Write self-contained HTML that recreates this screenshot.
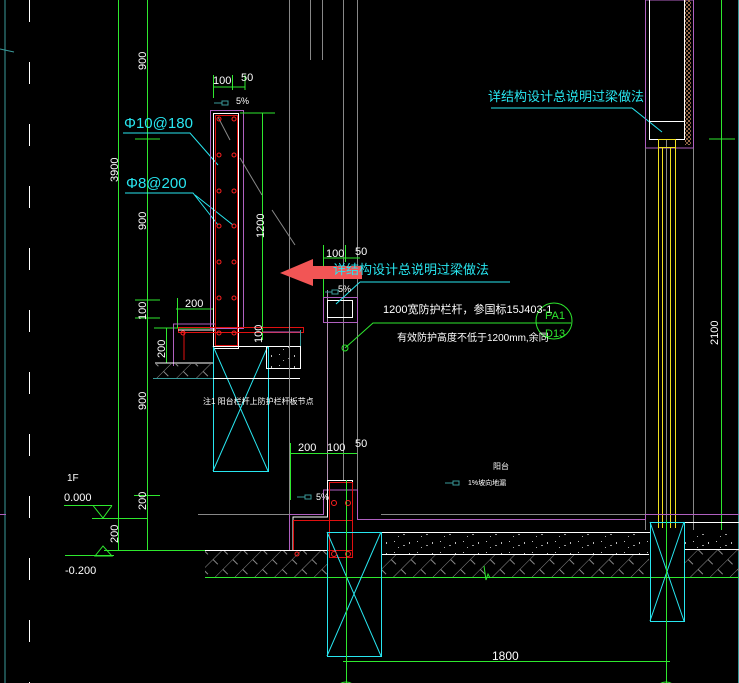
<!DOCTYPE html>
<html><head><meta charset="utf-8"><style>
html,body{margin:0;padding:0;background:#000;overflow:hidden}
svg{display:block}
text{font-family:"Liberation Sans","Noto Sans CJK SC",sans-serif}
</style></head><body>
<svg width="739" height="683" viewBox="0 0 739 683" xmlns="http://www.w3.org/2000/svg">
<defs>
<pattern id="hatch" width="14" height="14" patternUnits="userSpaceOnUse" patternTransform="rotate(45)">
<line x1="0" y1="0" x2="0" y2="14" stroke="#8a8a8a" stroke-width="1"/>
<line x1="0" y1="7" x2="7" y2="7" stroke="#8a8a8a" stroke-width="1"/>
</pattern>
<pattern id="dots" width="23" height="11" patternUnits="userSpaceOnUse">
<rect x="3" y="2" width="1" height="1" fill="#bbb"/><rect x="12" y="6" width="2" height="1" fill="#999"/><rect x="18" y="3" width="1" height="2" fill="#bbb"/><rect x="7" y="8" width="1" height="1" fill="#aaa"/>
</pattern>
<pattern id="brown" width="4" height="4" patternUnits="userSpaceOnUse"><rect width="2" height="2" fill="#a07050"/><rect x="2" y="2" width="2" height="2" fill="#8a6040"/></pattern>
</defs>
<g fill="none" stroke-width="1">
<!-- left -->
<line x1="5" y1="0" x2="5" y2="683" stroke="#3a9a9a"/>
<path d="M0 49 L14 52" stroke="#3a9a9a"/>
<line x1="29.5" y1="0" x2="29.5" y2="683" stroke="#fff" stroke-dasharray="22,40"/>
<line x1="118.5" y1="0" x2="118.5" y2="550" stroke="#2ee82e"/>
<line x1="147.5" y1="0" x2="147.5" y2="550" stroke="#2ee82e"/>
<line x1="135" y1="139" x2="160" y2="139" stroke="#2ee82e"/>
<line x1="135" y1="300" x2="160" y2="300" stroke="#2ee82e"/>
<line x1="135" y1="318" x2="160" y2="318" stroke="#2ee82e"/>
<line x1="154" y1="328" x2="215" y2="328" stroke="#2ee82e"/>
<line x1="166.5" y1="328" x2="166.5" y2="363" stroke="#2ee82e"/>
<line x1="177.5" y1="298" x2="177.5" y2="328" stroke="#2ee82e"/>
<line x1="176" y1="309" x2="213" y2="309" stroke="#2ee82e"/>
<!-- cyan leaders -->
<path d="M123 133 L190 133 L218 165" stroke="#28e6f0"/>
<path d="M125 193 L193 193 L218 225 M195 195 L233 225" stroke="#28e6f0"/>
<!-- wall top -->
<line x1="213" y1="87" x2="245" y2="87" stroke="#2ee82e"/>
<line x1="213.5" y1="75" x2="213.5" y2="98" stroke="#2ee82e"/>
<line x1="232.5" y1="75" x2="232.5" y2="90" stroke="#2ee82e"/>
<line x1="245" y1="75" x2="245" y2="90" stroke="#2ee82e"/>
<path d="M214 103 L222 103 M222 101 L228 101 L228 105 L222 105 Z" stroke="#3a9a9a"/>
<rect x="210.5" y="110.5" width="33" height="218" stroke="#b060c0"/>
<rect x="213.5" y="113.5" width="25" height="235" stroke="#fff"/>
<rect x="215.5" y="115.5" width="22" height="230" stroke="#e01010"/>
<line x1="262.5" y1="113" x2="262.5" y2="340" stroke="#2ee82e"/>
<line x1="240" y1="113" x2="275" y2="113" stroke="#2ee82e"/>
<path d="M218 117 L230 140 M240 158 L262 195 M272 210 L295 245" stroke="#888"/>
<!-- slab under wall -->
<path d="M173.5 366 L173.5 324 L215 324" stroke="#b060c0"/>
<rect x="178.5" y="327.5" width="125" height="5" stroke="#e01010"/>
<path d="M184 360 L184 332" stroke="#e01010"/>
<line x1="178" y1="330" x2="215" y2="330" stroke="#fff"/>
<line x1="155" y1="363" x2="213" y2="363" stroke="#fff"/>
<rect x="155" y="364" width="58" height="14" fill="url(#hatch)" stroke="none"/>
<line x1="153" y1="378.5" x2="300" y2="378.5" stroke="#3a9a9a"/>
<rect x="213.5" y="346.5" width="55" height="125" stroke="#28e6f0"/>
<path d="M213 346 L268 471 M268 346 L213 471" stroke="#28e6f0"/>
<line x1="213" y1="346.5" x2="300" y2="346.5" stroke="#fff"/>
<line x1="213" y1="378.5" x2="300" y2="378.5" stroke="#fff"/>
<rect x="266.5" y="346.5" width="34" height="22" stroke="#fff" fill="url(#dots)"/>
<line x1="263" y1="332" x2="300" y2="332" stroke="#b060c0"/>
<line x1="300.5" y1="330" x2="300.5" y2="346" stroke="#3a9a9a"/>
<!-- grey verticals -->
<line x1="289.5" y1="0" x2="289.5" y2="530" stroke="#888"/>
<line x1="327.5" y1="290" x2="327.5" y2="480" stroke="#b090b0"/>
<line x1="343.5" y1="0" x2="343.5" y2="480" stroke="#888"/>
<line x1="357.5" y1="0" x2="357.5" y2="520" stroke="#888"/>
<line x1="310.5" y1="0" x2="310.5" y2="60" stroke="#888"/>
<line x1="322.5" y1="0" x2="322.5" y2="60" stroke="#888"/>
<!-- small beam mid -->
<line x1="323" y1="258" x2="360" y2="258" stroke="#2ee82e"/>
<line x1="323.5" y1="245" x2="323.5" y2="300" stroke="#2ee82e"/>
<line x1="345.5" y1="245" x2="345.5" y2="262" stroke="#2ee82e"/>
<rect x="323.5" y="297.5" width="34" height="25" stroke="#b060c0"/>
<rect x="327.5" y="300.5" width="25" height="17" stroke="#fff"/>
<path d="M336 304 L360 282" stroke="#28e6f0"/>
<path d="M325 292 L332 292 M332 290 L338 290 L338 294 L332 294 Z" stroke="#3a9a9a"/>
<line x1="360" y1="282" x2="510" y2="282" stroke="#28e6f0"/>
<!-- leader PA1 -->
<path d="M345 348 L373 323 L571 323" stroke="#2ee82e"/>
<circle cx="345" cy="348" r="3" stroke="#2ee82e"/>
<circle cx="554" cy="321" r="18" stroke="#2ee82e"/>
<!-- right top -->
<line x1="491" y1="108" x2="632" y2="108" stroke="#28e6f0"/>
<path d="M632 108 L662 132" stroke="#28e6f0"/>
<rect x="645.5" y="0" width="48" height="148" stroke="#b060c0"/>
<line x1="649.5" y1="0" x2="649.5" y2="140" stroke="#fff"/>
<line x1="684.5" y1="0" x2="684.5" y2="140" stroke="#fff"/>
<rect x="685" y="0" width="6" height="145" fill="url(#brown)" stroke="none"/>
<rect x="649.5" y="121.5" width="35" height="18" stroke="#fff"/>
<line x1="645.5" y1="148" x2="645.5" y2="530" stroke="#888"/>
<line x1="693.5" y1="148" x2="693.5" y2="530" stroke="#888"/>
<line x1="666.5" y1="140" x2="666.5" y2="520" stroke="#888"/>
<rect x="658.5" y="139.5" width="17" height="8" stroke="#f0e020"/>
<path d="M658.5 148 L658.5 528 M675.5 148 L675.5 528 M662.5 148 L662.5 528 M670.5 148 L670.5 528" stroke="#f0e020"/>
<line x1="721.5" y1="0" x2="721.5" y2="530" stroke="#2ee82e"/>
<line x1="709" y1="139" x2="735" y2="139" stroke="#2ee82e"/>
<line x1="738.5" y1="0" x2="738.5" y2="683" stroke="#3a9a9a"/>
<!-- bottom -->
<line x1="0" y1="514.5" x2="6" y2="514.5" stroke="#b060c0"/>
<line x1="198" y1="514.5" x2="289" y2="514.5" stroke="#888"/>
<line x1="381" y1="514.5" x2="645" y2="514.5" stroke="#888"/>
<path d="M289.5 550 L289.5 514.5 L323.5 514.5 L323.5 490 L357.5 490 L357.5 519.5 L645.5 519.5 L645.5 514.5 L739 514.5" stroke="#b060c0"/>
<path d="M293 550 L293 517 L327.5 517 L327.5 480.5 L352.5 480.5 L352.5 532.5 L650 532.5" stroke="#fff"/>
<rect x="329.5" y="482.5" width="23" height="75" stroke="#e01010"/>
<rect x="293.5" y="520.5" width="59" height="30" stroke="#e01010" />
<line x1="205" y1="550.5" x2="327" y2="550.5" stroke="#fff"/>
<rect x="205" y="551" width="122" height="26" fill="url(#hatch)" stroke="none"/>
<rect x="382" y="533" width="267" height="21" fill="url(#dots)" stroke="none"/>
<line x1="382" y1="554.5" x2="649" y2="554.5" stroke="#fff"/>
<rect x="382" y="555" width="267" height="22" fill="url(#hatch)" stroke="none"/>
<rect x="684" y="533" width="55" height="16" fill="url(#dots)" stroke="none"/>
<path d="M650 522.5 L739 522.5 M684 549.5 L739 549.5" stroke="#fff"/>
<rect x="684" y="550" width="55" height="27" fill="url(#hatch)" stroke="none"/>
<line x1="205" y1="577.5" x2="739" y2="577.5" stroke="#2ee82e"/>
<path d="M484 566 L486 580 L488 574 L490 578" stroke="#2ee82e"/>
<rect x="327.5" y="532.5" width="54" height="124" stroke="#28e6f0"/>
<path d="M327 532 L381 656 M381 532 L327 656" stroke="#28e6f0"/>
<rect x="650.5" y="522.5" width="34" height="99" stroke="#28e6f0"/>
<path d="M650 522 L684 621 M684 522 L650 621" stroke="#28e6f0"/>
<line x1="346.5" y1="480" x2="346.5" y2="683" stroke="#2ee82e"/>
<line x1="666.5" y1="520" x2="666.5" y2="683" stroke="#2ee82e"/>
<line x1="343" y1="661.5" x2="670" y2="661.5" stroke="#2ee82e"/>
<circle cx="346" cy="693" r="11" stroke="#2ee82e"/>
<circle cx="666" cy="693" r="11" stroke="#2ee82e"/>
<line x1="290" y1="453.5" x2="357" y2="453.5" stroke="#2ee82e"/>
<line x1="290.5" y1="443" x2="290.5" y2="500" stroke="#2ee82e"/>
<path d="M297 497 L305 497 M305 495 L311 495 L311 499 L305 499 Z" stroke="#3a9a9a"/>
<path d="M445 483 L453 483 M453 481 L459 481 L459 485 L453 485 Z" stroke="#3a9a9a"/>
<!-- elevation -->
<line x1="64" y1="505.5" x2="112" y2="505.5" stroke="#2ee82e"/>
<path d="M93 505.5 L103 518 L112 505.5" stroke="#2ee82e"/>
<line x1="92" y1="518.5" x2="148" y2="518.5" stroke="#2ee82e"/>
<line x1="104" y1="550.5" x2="205" y2="550.5" stroke="#2ee82e"/>
<path d="M95 556 L103 546 L112 556 Z" stroke="#2ee82e"/>
<line x1="65" y1="555.5" x2="114" y2="555.5" stroke="#2ee82e"/>
<line x1="134" y1="495.5" x2="160" y2="495.5" stroke="#2ee82e"/>
</g>
<!-- rebar dots -->
<g fill="none" stroke="#ff2020">
<circle cx="219" cy="119" r="2"/><circle cx="234" cy="119" r="2"/>
<circle cx="219" cy="155" r="2"/><circle cx="234" cy="155" r="2"/>
<circle cx="219" cy="191" r="2"/><circle cx="234" cy="191" r="2"/>
<circle cx="219" cy="226" r="2"/><circle cx="234" cy="226" r="2"/>
<circle cx="219" cy="262" r="2"/><circle cx="234" cy="262" r="2"/>
<circle cx="219" cy="298" r="2"/><circle cx="234" cy="298" r="2"/>
<circle cx="219" cy="333" r="2"/><circle cx="234" cy="333" r="2"/>
<circle cx="183" cy="333" r="2"/>
<circle cx="334" cy="503" r="2.5"/><circle cx="348" cy="503" r="2.5"/>
<circle cx="297" cy="554" r="2"/><circle cx="334" cy="554" r="2.5"/><circle cx="348" cy="554" r="2.5"/>
</g>
<!-- arrow -->
<path d="M280 273 L313 259 L313 266 L362 266 L362 279 L313 279 L313 286 Z" fill="#f25555"/>
<!-- texts -->
<g fill="#fff" font-size="11">
<text transform="translate(146,70) rotate(-90)">900</text>
<text transform="translate(118,182) rotate(-90)">3900</text>
<text transform="translate(146,230) rotate(-90)">900</text>
<text transform="translate(146,320) rotate(-90)">100</text>
<text transform="translate(165,358) rotate(-90)">200</text>
<text transform="translate(146,410) rotate(-90)">900</text>
<text transform="translate(146,510) rotate(-90)">200</text>
<text transform="translate(118,543) rotate(-90)">200</text>
<text transform="translate(264,238) rotate(-90)">1200</text>
<text transform="translate(262,343) rotate(-90)">100</text>
<text transform="translate(718,345) rotate(-90)">2100</text>
<text x="213" y="84">100</text><text x="241" y="81">50</text>
<text x="236" y="104" font-size="9">5%</text>
<text x="185" y="307">200</text>
<text x="326" y="257">100</text><text x="355" y="255">50</text>
<text x="338" y="292" font-size="9">5%</text>
<text x="298" y="451">200</text><text x="327" y="451">100</text><text x="355" y="447">50</text>
<text x="316" y="500" font-size="9">5%</text>
<text x="383" y="313" font-size="11">1200宽防护栏杆，参国标15J403-1</text>
<text x="397" y="341" font-size="10">有效防护高度不低于1200mm,余同</text>
<text x="203" y="404" font-size="8">注1 阳台栏杆上防护栏杆板节点</text>
<text x="493" y="469" font-size="8">阳台</text>
<text x="468" y="485" font-size="7">1%坡向地漏</text>
<text x="67" y="481" font-size="10">1F</text>
<text x="64" y="501">0.000</text>
<text x="65" y="574">-0.200</text>
<text x="492" y="660" font-size="12">1800</text>
</g>
<g fill="#2ee82e" font-size="11">
<text x="545" y="319">PA1</text><text x="545" y="337">D13</text>
</g>
<g fill="#28e6f0">
<text x="124" y="128" font-size="15">Φ10@180</text>
<text x="126" y="188" font-size="15">Φ8@200</text>
<text x="333" y="274" font-size="13">详结构设计总说明过梁做法</text>
<text x="488" y="101" font-size="13">详结构设计总说明过梁做法</text>
</g>
</svg>
</body></html>
